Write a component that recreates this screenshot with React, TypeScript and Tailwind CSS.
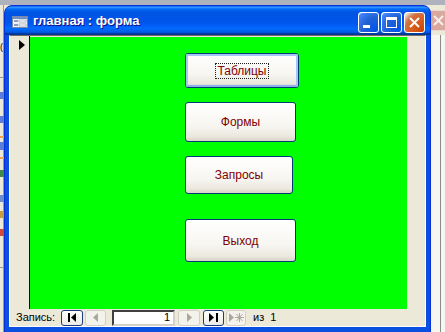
import type { ReactNode } from "react";

const titleGradient =
  "bg-[linear-gradient(180deg,#0058ee_0%,#3593ff_4%,#288eff_6%,#127dff_8%,#036ffc_10%,#0262ee_14%,#0057e5_20%,#0054e3_24%,#0055eb_56%,#005bf5_66%,#026afe_76%,#0062ef_86%,#0052d6_92%,#0040ab_94%,#003092_100%)]";

function FormButton({ w, h, focused, children }: { w: string; h: string; focused?: boolean; children: ReactNode }) {
  return (
    <div
      className={`${w} ${h} rounded-[3px] border border-[#003c74] bg-[linear-gradient(180deg,#ffffff_0%,#f7f6f1_60%,#ebe8df_88%,#d8d3c6_100%)] flex items-center justify-center`}
    >
      <div
        className={`w-full h-full rounded-[2px] flex items-center justify-center ${
          focused ? "border-2 border-[#a6c4f5] border-b-[#8cb0ee]" : ""
        }`}
      >
        <span
          className={`text-[12px] leading-[14px] text-[#800000] px-[1px] ${
            focused ? "outline-1 outline-dotted outline-[#202020]" : ""
          }`}
        >
          {children}
        </span>
      </div>
    </div>
  );
}

function NavBtn({ w, active, children }: { w: string; active?: boolean; children: ReactNode }) {
  return (
    <div
      className={`${w} h-[16px] rounded-[3px] border flex items-center justify-center ${
        active
          ? "border-[#1c3b7e] bg-[linear-gradient(180deg,#ffffff,#ecebe6)]"
          : "border-[#d2cfc2] bg-[#f3f2ec]"
      }`}
    >
      {children}
    </div>
  );
}

export default function App() {
  return (
    <div className="relative w-[445px] h-[332px] overflow-hidden bg-[#ece9d8] font-['Liberation_Sans',Arial,sans-serif]">
      {/* background application behind the form window */}
      <div className="absolute left-0 top-0 w-full h-[5px] bg-[#aeb2bc]" />
      <div className="absolute left-[3px] top-[5px] w-px h-full bg-[#9d9a8c]" />
      <div className="absolute left-0 top-[43px] w-[3px] h-[9px] text-[9px] leading-[9px] text-black">(</div>
      <div className="absolute left-0 top-[77px] w-[4px] h-px bg-[#9d9a8c]" />
      <div className="absolute left-0 top-[92px] w-[4px] h-[7px] bg-[#5a7fd8]" />
      <div className="absolute left-0 top-[116px] w-[4px] h-[7px] bg-[#5a7fd8]" />
      <div className="absolute left-0 top-[136px] w-[4px] h-[2px] bg-[#f2a54a]" />
      <div className="absolute left-0 top-[142px] w-[4px] h-[8px] bg-[#5a7fd8]" />
      <div className="absolute left-0 top-[157px] w-[4px] h-[2px] bg-[#f2a54a]" />
      <div className="absolute left-0 top-[170px] w-[4px] h-[7px] bg-[#3f8a4a]" />
      <div className="absolute left-0 top-[195px] w-[4px] h-[7px] bg-[#6d8fc9]" />
      <div className="absolute left-0 top-[211px] w-[4px] h-[7px] bg-[#c69c3c]" />
      <div className="absolute left-0 top-[229px] w-[4px] h-[7px] bg-[#d04a3c]" />
      <div className="absolute left-0 top-[267px] w-[4px] h-px bg-[#9d9a8c]" />
      <div className="absolute left-[428px] top-[10px] w-[21px] h-[21px] rounded-[3px] bg-[#d9a9a0] border border-[#ecd7d2] flex items-center justify-center">
        <svg width="11" height="11" viewBox="0 0 11 11">
          <path d="M1 1 L10 10 M10 1 L1 10" stroke="#f6eeec" strokeWidth="2" />
        </svg>
      </div>
      <div className="absolute left-[431px] top-[35px] w-[14px] h-[297px] bg-[#f7f6f1]" />
      <div className="absolute left-[440px] top-[35px] w-px h-[297px] bg-[#8c8c8c]" />

      {/* form window */}
      <div className="relative ml-[4px] mt-[5px] w-[427px] h-[330px] rounded-t-[8px] bg-[#0a4fe0] border border-[#0831d9] flex flex-col">
        <div className={`h-[29px] rounded-t-[7px] ${titleGradient} flex items-center pl-[7px] pr-[5px]`}>
          <svg width="16" height="12" viewBox="0 0 16 12" className="mt-[2px]">
            <rect x="0.5" y="0.5" width="15" height="11" fill="#f4f4f4" stroke="#7a8aa8" />
            <rect x="1" y="1" width="14" height="2" fill="#6f8fc8" />
            <rect x="2" y="4" width="4" height="2" fill="#8aa0c8" />
            <rect x="7" y="4" width="7" height="2" fill="#ffffff" stroke="#8a96b0" strokeWidth="0.6" />
            <rect x="2" y="8" width="4" height="2" fill="#8aa0c8" />
            <rect x="7" y="8" width="7" height="2" fill="#ffffff" stroke="#8a96b0" strokeWidth="0.6" />
          </svg>
          <span className="ml-[5px] text-[13px] font-bold text-white [text-shadow:1px_1px_#0f1089] mt-[1px]">
            главная : форма
          </span>
          <div className="ml-auto flex gap-[2px] mt-[3px]">
            <div className="w-[21px] h-[21px] rounded-[3px] border border-white bg-[radial-gradient(circle_at_90%_90%,#0054e9_0%,#2263d5_55%,#4282ff_90%,#ffffff_100%)] flex items-end pl-[4px] pb-[4px]">
              <div className="w-[7px] h-[3px] bg-white" />
            </div>
            <div className="w-[21px] h-[21px] rounded-[3px] border border-white bg-[radial-gradient(circle_at_90%_90%,#0054e9_0%,#2263d5_55%,#4282ff_90%,#ffffff_100%)] flex items-center justify-center">
              <div className="w-[11px] h-[11px] border border-white border-t-[3px]" />
            </div>
            <div className="w-[21px] h-[21px] rounded-[3px] border border-white bg-[radial-gradient(circle_at_90%_90%,#cc4600_0%,#dc6527_55%,#cd7546_70%,#ffffff_100%)] flex items-center justify-center">
              <svg width="11" height="11" viewBox="0 0 11 11">
                <path d="M1 1 L10 10 M10 1 L1 10" stroke="#ffffff" strokeWidth="2" />
              </svg>
            </div>
          </div>
        </div>

        <div className="mx-[4px] h-[292px] bg-[#ece9d8] border-t border-t-[#716f64] border-l border-l-white border-r border-r-white border-b border-b-white flex flex-col">
          <div className="h-[273px] flex">
            <div className="w-[20px] border-r border-black flex justify-start pt-[4px] pl-[9px]">
              <svg width="6" height="10" viewBox="0 0 6 10">
                <path d="M0 0 L6 5 L0 10 Z" fill="#000000" />
              </svg>
            </div>
            <div className="w-[377px] mt-[1px] bg-[#00ff00] flex flex-col pl-[155px] pt-[16px]">
              <FormButton w="w-[114px]" h="h-[35px]" focused>
                Таблицы
              </FormButton>
              <div className="mt-[14px]">
                <FormButton w="w-[111px]" h="h-[40px]">
                  Формы
                </FormButton>
              </div>
              <div className="mt-[14px]">
                <FormButton w="w-[108px]" h="h-[38px]">
                  Запросы
                </FormButton>
              </div>
              <div className="mt-[25px]">
                <FormButton w="w-[111px]" h="h-[43px]">
                  Выход
                </FormButton>
              </div>
            </div>
            <div className="flex-1" />
          </div>

          <div className="h-[17px] flex items-center pl-[6px] text-[11px] text-black">
            <span className="w-[45px]">Запись:</span>
            <NavBtn w="w-[22px]" active>
              <svg width="9" height="9" viewBox="0 0 9 9">
                <rect x="0" y="0" width="2" height="9" fill="#000" />
                <path d="M8 0 L3 4.5 L8 9 Z" fill="#000" />
              </svg>
            </NavBtn>
            <div className="ml-[2px]">
              <NavBtn w="w-[21px]">
                <svg width="5" height="9" viewBox="0 0 5 9">
                  <path d="M5 0 L0 4.5 L5 9 Z" fill="#aca899" />
                </svg>
              </NavBtn>
            </div>
            <div className="ml-[6px] w-[63px] h-[16px] bg-white border-2 border-t-[#404040] border-l-[#404040] border-r-[#d4d0c8] border-b-[#d4d0c8] flex items-center justify-end pr-[3px] leading-none">
              1
            </div>
            <div className="ml-[3px]">
              <NavBtn w="w-[22px]">
                <svg width="5" height="9" viewBox="0 0 5 9">
                  <path d="M0 0 L5 4.5 L0 9 Z" fill="#aca899" />
                </svg>
              </NavBtn>
            </div>
            <div className="ml-[3px]">
              <NavBtn w="w-[21px]" active>
                <svg width="9" height="9" viewBox="0 0 9 9">
                  <path d="M0 0 L5 4.5 L0 9 Z" fill="#000" />
                  <rect x="7" y="0" width="2" height="9" fill="#000" />
                </svg>
              </NavBtn>
            </div>
            <div className="ml-[2px]">
              <NavBtn w="w-[20px]">
                <svg width="15" height="11" viewBox="0 0 15 11">
                  <path d="M0 1 L5 5.5 L0 10 Z" fill="#aca899" />
                  <path d="M10.5 1 V10 M6 5.5 H15 M7.5 2 L13.5 9 M13.5 2 L7.5 9" stroke="#aca899" strokeWidth="1" />
                </svg>
              </NavBtn>
            </div>
            <span className="ml-[7px]">из&nbsp; 1</span>
          </div>
        </div>
      </div>
    </div>
  );
}
